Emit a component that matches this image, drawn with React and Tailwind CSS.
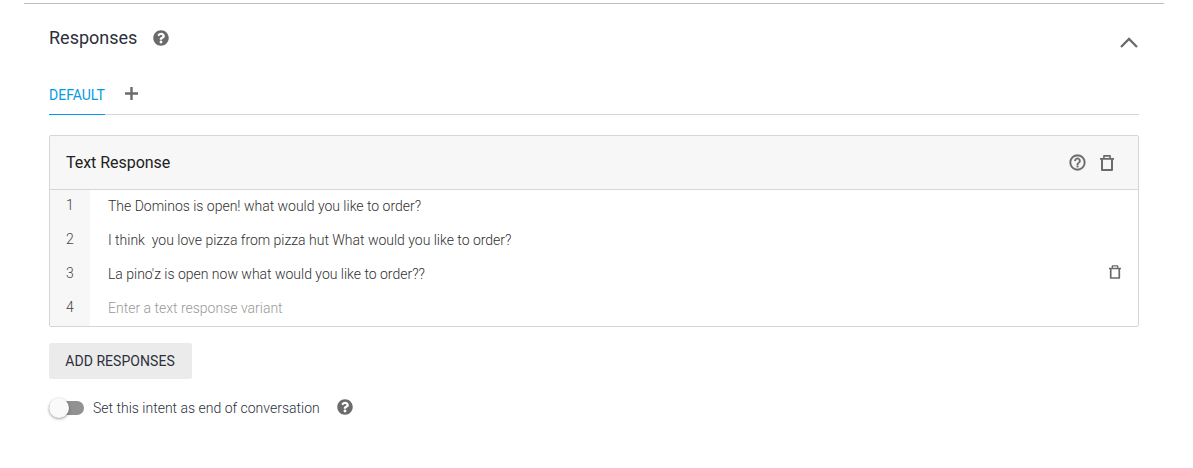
import React from "react";

function HelpSolid() {
  return (
    <svg className="size-4 text-[#6b6b6b]" viewBox="0 0 512 512" fill="currentColor">
      <path d="M504 256c0 137-111 248-248 248S8 393 8 256 119 8 256 8s248 111 248 248zM262.700 90c-54.500 0-89.300 23-116.500 63.800-3.500 5.300-2.400 12.400 2.700 16.300l34.700 26.300c5.200 3.900 12.600 3 16.700-2.100 17.900-22.700 30.100-35.800 57.300-35.800 20.400 0 45.700 13.100 45.700 33 0 15-12.400 22.700-32.500 34C247.100 238.500 216 254.900 216 296v4c0 6.600 5.400 12 12 12h56c6.600 0 12-5.400 12-12v-1.300c0-28.500 83.200-29.600 83.200-106.700 0-58-60.200-102-116.500-102zM256 338c-25.400 0-46 20.600-46 46 0 25.400 20.600 46 46 46s46-20.600 46-46c0-25.400-20.600-46-46-46z" />
    </svg>
  );
}

function HelpOutline() {
  return (
    <svg className="size-[19px]" viewBox="0 0 24 24" fill="currentColor" stroke="currentColor" strokeWidth="0.400">
      <path d="M11 18h2v-2h-2v2zm1-16C6.480 2 2 6.480 2 12s4.480 10 10 10 10-4.480 10-10S17.520 2 12 2zm0 18c-4.410 0-8-3.590-8-8s3.590-8 8-8 8 3.590 8 8-3.590 8-8 8zm0-14c-2.210 0-4 1.790-4 4h2c0-1.100.9-2 2-2s2 .9 2 2c0 2-3 1.750-3 5h2c0-2.250 3-2.500 3-5 0-2.210-1.790-4-4-4z" />
    </svg>
  );
}

function Trash({ className }) {
  return (
    <svg className={className} viewBox="0 0 14 16" fill="none" stroke="currentColor">
      <path d="M0 3.800h14" strokeWidth="1.800" />
      <path d="M3.900 3.500V.9h6.200v2.600" strokeWidth="1.600" strokeLinejoin="round" />
      <path d="M2 4v11h10V4" strokeWidth="2" strokeLinejoin="round" />
    </svg>
  );
}

const rows = [
  "The Dominos is open! what would you like to order?",
  "I think  you love pizza from pizza hut What would you like to order?",
  "La pino'z is open now what would you like to order??",
];

function Row({ number, children }) {
  return (
    <div className="flex h-[34px]">
      <div className="w-10 bg-[#f7f7f7] pt-[5px] text-center leading-5 text-[#444]">{number}</div>
      <div className="flex flex-1 items-center justify-between whitespace-pre pr-[17px] pb-0.5 pl-[18px]">{children}</div>
    </div>
  );
}

export default function App() {
  return (
    <main className="h-[468px] bg-white pt-[3px] pr-[29px] pl-6 font-['Roboto',sans-serif] text-sm text-[#2b303b]">
      <section className="border-t border-[#bdbdbd] px-[25px]">
        <header className="flex h-[68px] items-center justify-between">
          <div className="flex items-center gap-[15.500px]">
            <h2 className="text-lg leading-6">Responses</h2>
            <HelpSolid />
          </div>
          <svg className="mt-2 mr-px h-[11px] w-[18px]" viewBox="0 0 18 11" fill="none" stroke="#6b6b6b" strokeWidth="2.300">
            <path d="M1 10 9 2l8 8" />
          </svg>
        </header>
        <nav className="flex h-[43px] border-b border-[#d6d6d6]">
          <div className="-mb-px flex h-[43px] items-center border-b border-[#039be5] pt-[3px] text-[#039be5]">DEFAULT</div>
          <svg className="mt-[15px] ml-5 size-[13px]" viewBox="0 0 13 13" stroke="#6b6b6b" strokeWidth="2.400">
            <path d="M0 6.500h13M6.500 0v13" />
          </svg>
        </nav>
        <section className="mt-5 h-[192px] overflow-hidden rounded-[2px] border border-[#d6d6d6]">
          <header className="flex h-[54px] items-center justify-between border-b border-[#d6d6d6] bg-[#f7f7f7] pr-6 pl-4">
            <h3 className="text-base tracking-[-0.03px] text-[#212121]">Text Response</h3>
            <div className="flex items-center gap-[13.500px] text-[#6b6b6b]">
              <HelpOutline />
              <Trash className="h-4 w-3.5" />
            </div>
          </header>
          <div className="font-light text-[#303030]">
            {rows.map((text, index) => (
              <Row key={text} number={index + 1}>
                <span className="tracking-[-0.01px]">{text}</span>
                {index === 2 && <Trash className="mb-1 h-3.5 w-3 text-[#6b6b6b]" />}
              </Row>
            ))}
            <Row number={4}>
              <span className="text-[#999]">Enter a text response variant</span>
            </Row>
          </div>
        </section>
        <button className="mt-4 flex h-9 w-[143px] items-center justify-center rounded-[2px] bg-[#ebebeb] pr-px tracking-[0.05px]">ADD RESPONSES</button>
        <div className="mt-[19px] flex h-5 items-center">
          <div className="flex h-3.5 w-[35px] items-center rounded-full bg-[#919191]">
            <div className="size-5 shrink-0 rounded-full bg-[#fafafa] shadow-[0_1px_3px_rgba(0,0,0,0.4)]" />
          </div>
          <span className="ml-[9px] font-light">Set this intent as end of conversation</span>
          <span className="mb-[3px] ml-[17.500px]">
            <HelpSolid />
          </span>
        </div>
      </section>
    </main>
  );
}
